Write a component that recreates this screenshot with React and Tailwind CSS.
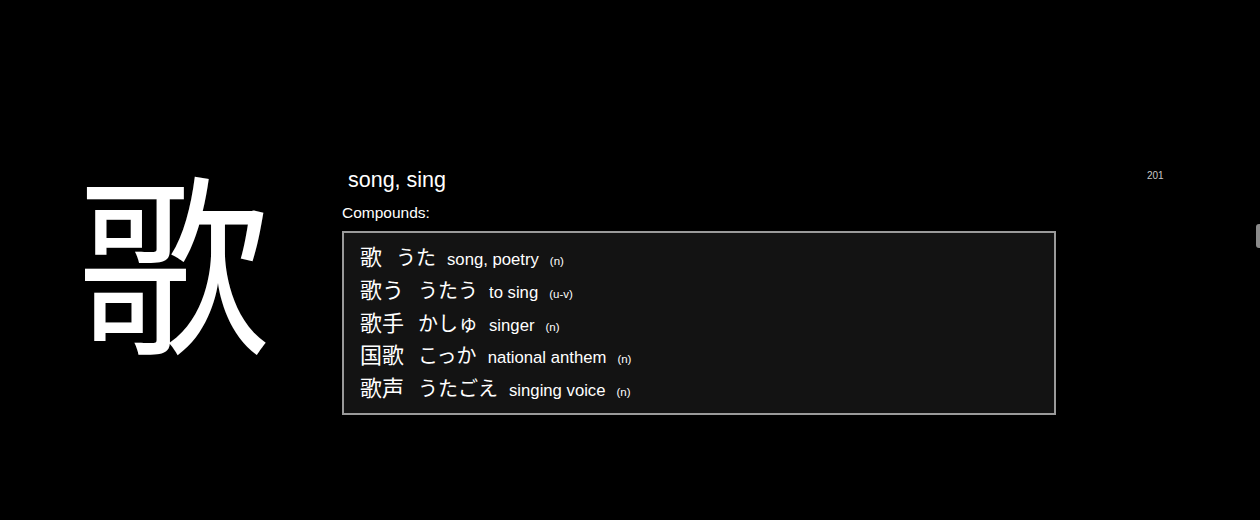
import React from "react";

const compounds = [
    { word: "歌", kana: "うた", meaning: "song, poetry", pos: "(n)" },
    { word: "歌う", kana: "うたう", meaning: "to sing", pos: "(u-v)" },
    { word: "歌手", kana: "かしゅ", meaning: "singer", pos: "(n)" },
    { word: "国歌", kana: "こっか", meaning: "national anthem", pos: "(n)" },
    { word: "歌声", kana: "うたごえ", meaning: "singing voice", pos: "(n)" }
];

const jp = { fontFamily: '"Liberation Sans", "Noto Sans CJK JP", sans-serif' };

export default function App() {
    return (
        <div className="relative w-full h-[520px] bg-black text-white overflow-hidden" style={jp}>
            <div className="flex pt-[166px]">
                <div className="w-[342px] shrink-0 flex justify-center pl-[6px] mt-[10px]">
                    <div className="text-[193px] leading-none">歌</div>
                </div>
                <div className="flex-1">
                    <div className="pl-[6px] text-[21.5px] leading-[28px]">song, sing</div>
                    <div className="mt-[10px] text-[15.5px] leading-[18px]">Compounds:</div>
                    <div className="mt-[9px] w-[714px] h-[184px] border-2 border-[#9a9a9a] bg-[#131313] pl-[16px] pt-[8px]">
                        {compounds.map((c) => (
                            <div key={c.word} className="flex items-baseline h-[32.75px]">
                                <span className="text-[22px] mr-[14px]">{c.word}</span>
                                <span className="text-[20px] mr-[11px]">{c.kana}</span>
                                <span className="text-[16.7px] mr-[11px]">{c.meaning}</span>
                                <span className="text-[11.5px]">{c.pos}</span>
                            </div>
                        ))}
                    </div>
                </div>
                <div className="w-[113px] shrink-0 pt-[2px] text-[10px] text-[#c8c8c8]">201</div>
            </div>
            <div className="absolute right-0 top-[224px] w-[4px] h-[24px] rounded-l-[3px] bg-[#8a8a8a]"></div>
        </div>
    );
}
